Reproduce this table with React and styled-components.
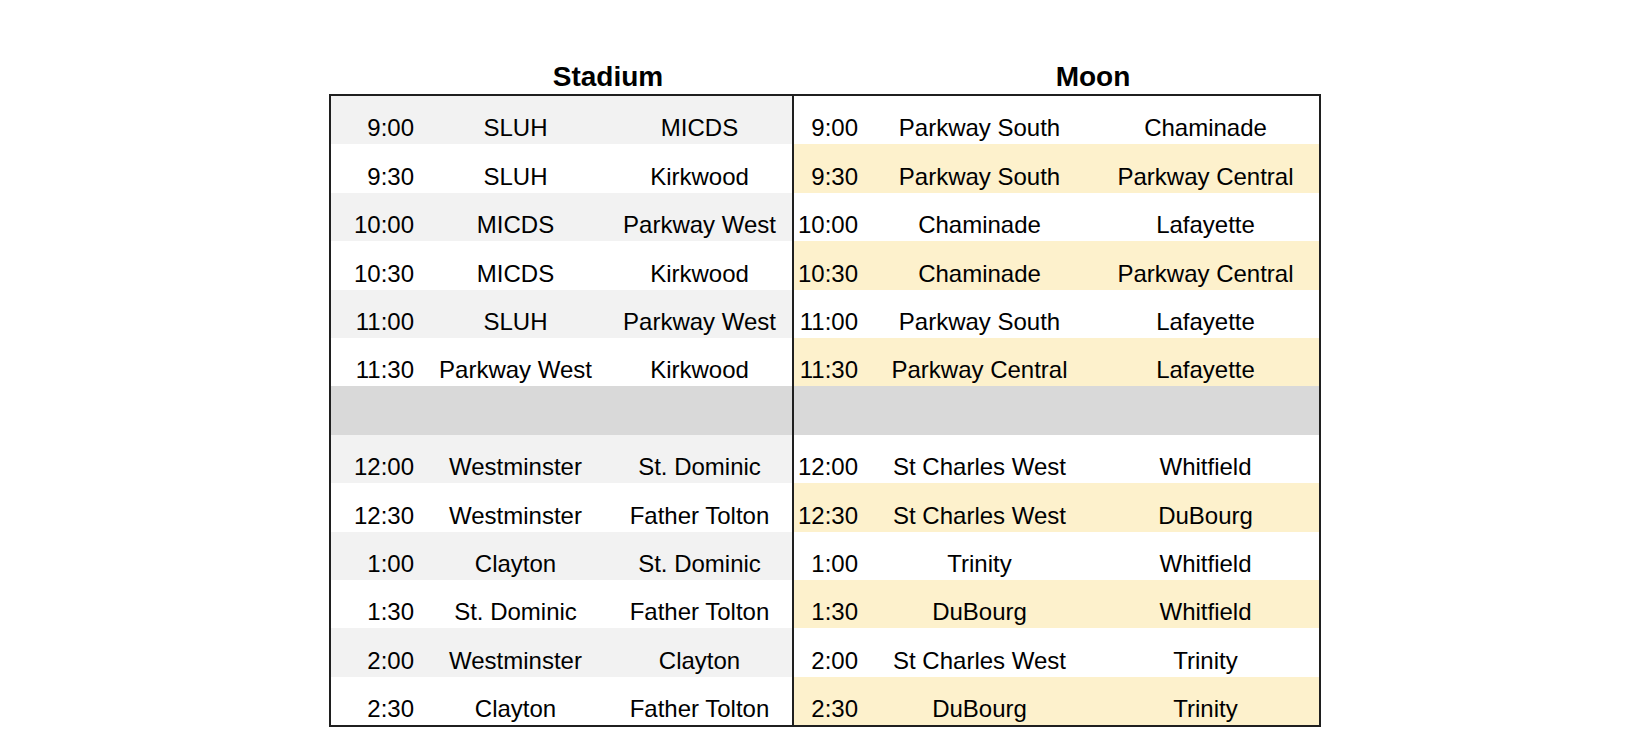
import React from 'react'
import styled, { createGlobalStyle } from 'styled-components'

const GlobalStyle = createGlobalStyle`
  body {
    margin: 0;
    background: #fff;
    font-family: "Liberation Sans", Arial, sans-serif;
    color: #000;
  }
`

const ROW_H = 48.4
const LINE = '2px solid #1f1f1f'

const Page = styled.div`
  display: flex;
  justify-content: center;
  padding-top: 60px;
`

const Board = styled.div`
  display: flex;
  align-items: flex-start;
`

const Section = styled.div`
  display: flex;
  flex-direction: column;
`

const Heading = styled.div`
  height: 34px;
  line-height: 34px;
  margin-left: ${p => p.$offset}px;
  text-align: center;
  font-size: 28px;
  font-weight: 700;
`

const Table = styled.div`
  border-top: ${LINE};
  border-bottom: ${LINE};
  border-right: ${LINE};
  border-left: ${p => (p.$first ? LINE : 'none')};
`

const Row = styled.div`
  display: grid;
  grid-template-columns: ${p => p.$cols};
  height: ${ROW_H}px;
  background: ${p => p.$bg};
`

const Cell = styled.div`
  display: flex;
  align-items: flex-end;
  justify-content: center;
  padding-bottom: 4px;
  font-size: 24px;
  line-height: 24px;
  white-space: nowrap;
`

const Time = styled(Cell)`
  justify-content: flex-end;
  padding-right: ${p => p.$pad}px;
`

const stadium = [
  ['9:00', 'SLUH', 'MICDS'],
  ['9:30', 'SLUH', 'Kirkwood'],
  ['10:00', 'MICDS', 'Parkway West'],
  ['10:30', 'MICDS', 'Kirkwood'],
  ['11:00', 'SLUH', 'Parkway West'],
  ['11:30', 'Parkway West', 'Kirkwood'],
  null,
  ['12:00', 'Westminster', 'St. Dominic'],
  ['12:30', 'Westminster', 'Father Tolton'],
  ['1:00', 'Clayton', 'St. Dominic'],
  ['1:30', 'St. Dominic', 'Father Tolton'],
  ['2:00', 'Westminster', 'Clayton'],
  ['2:30', 'Clayton', 'Father Tolton']
]

const moon = [
  ['9:00', 'Parkway South', 'Chaminade'],
  ['9:30', 'Parkway South', 'Parkway Central'],
  ['10:00', 'Chaminade', 'Lafayette'],
  ['10:30', 'Chaminade', 'Parkway Central'],
  ['11:00', 'Parkway South', 'Lafayette'],
  ['11:30', 'Parkway Central', 'Lafayette'],
  null,
  ['12:00', 'St Charles West', 'Whitfield'],
  ['12:30', 'St Charles West', 'DuBourg'],
  ['1:00', 'Trinity', 'Whitfield'],
  ['1:30', 'DuBourg', 'Whitfield'],
  ['2:00', 'St Charles West', 'Trinity'],
  ['2:30', 'DuBourg', 'Trinity']
]

const BREAK = '#d9d9d9'

const Field = ({ title, games, widths, timePad, stripe, stripeOdd, first }) => {
  const cols = widths.map(w => `${w}px`).join(' ')
  return <Section>
    <Heading $offset={widths[0] + (first ? 2 : 0)} style={{ width: widths[1] + widths[2] }}>
      {title}
    </Heading>
    <Table $first={first}>
      {games.map((g, i) => {
        if (!g) return <Row key={i} $cols={cols} $bg={BREAK} />
        // stripes restart after the lunch break
        const idx = i > 6 ? i - 7 : i
        const striped = stripeOdd ? idx % 2 === 1 : idx % 2 === 0
        return (
          <Row key={i} $cols={cols} $bg={striped ? stripe : '#fff'}>
            <Time $pad={timePad}>{g[0]}</Time>
            <Cell>{g[1]}</Cell>
            <Cell>{g[2]}</Cell>
          </Row>
        )
      })}
    </Table>
  </Section>
}

const App = () => <>
  <GlobalStyle />
  <Page>
    <Board>
      <Field
        first
        title="Stadium"
        games={stadium}
        widths={[93, 183, 185]}
        timePad={10}
        stripe="#f2f2f2" />
      <Field
        title="Moon"
        games={moon}
        widths={[73, 225, 227]}
        timePad={9}
        stripe="#fdf1cc"
        stripeOdd />
    </Board>
  </Page>
</>

export default App
